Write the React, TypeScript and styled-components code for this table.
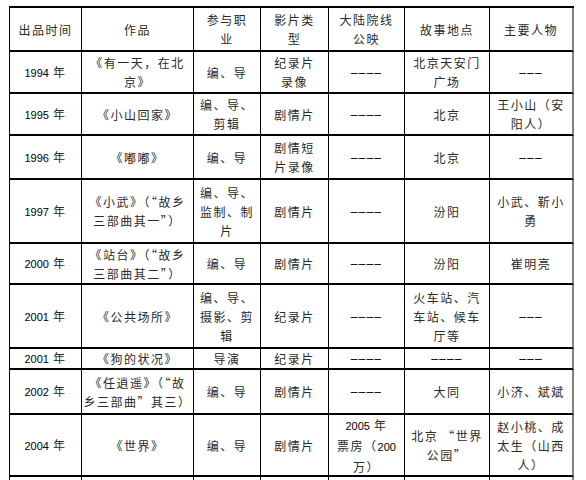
import React from 'react';
import styled, { createGlobalStyle } from 'styled-components';

const GlobalStyle = createGlobalStyle`
  html, body {
    margin: 0;
    padding: 0;
    background: #fff;
    overflow: hidden;
  }
  body {
    font-family: "Noto Sans CJK SC", "Liberation Sans", sans-serif;
  }
`;

const Page = styled.div`
  padding: 6px 0 0 9px;
  height: 480px;
  box-sizing: border-box;
`;

const Table = styled.div`
  display: grid;
  grid-template-columns: 72px 112px 67px 68px 76px 85px 84px;
  width: fit-content;
  border-top: 2px solid #000;
  border-left: 1px solid #000;
`;

const Cell = styled.div<{ $h: number; $last?: boolean }>`
  box-sizing: border-box;
  height: ${({ $h }) => $h}px;
  border-right: ${({ $last }) => ($last ? '2px solid #808080' : '1px solid #000')};
  border-bottom: 2px solid #000;
  display: flex;
  flex-direction: column;
  align-items: center;
  justify-content: center;
  overflow: hidden;
  font-family: "Noto Sans CJK SC", "Liberation Sans", sans-serif;
  font-size: 12px;
  line-height: 19px;
  letter-spacing: 1.5px;
  color: #2a2a2a;
  text-align: center;
  white-space: nowrap;
`;

const Line = styled.span`
  display: block;
`;

const Num = styled.span`
  font-family: "Liberation Sans", sans-serif;
  font-size: 11px;
  letter-spacing: 0;
  color: #000;
`;

const Dash = styled.span`
  font-family: "Liberation Sans", sans-serif;
  font-size: 12px;
  letter-spacing: 1.2px;
  color: #000;
`;

const header = ['出品时间', '作品', '参与职\n业', '影片类\n型', '大陆院线\n公映', '故事地点', '主要人物'];

const D4 = '––––';
const D3 = '–––';

const rows: { h: number; cells: string[] }[] = [
  { h: 42, cells: ['1994 年', '《有一天，在北\n京》', '编、导', '纪录片\n录像', D4, '北京天安门\n广场', D3] },
  { h: 42, cells: ['1995 年', '《小山回家》', '编、导、\n剪辑', '剧情片', D4, '北京', '王小山（安\n阳人）'] },
  { h: 44, cells: ['1996 年', '《嘟嘟》', '编、导', '剧情短\n片录像', D4, '北京', D3] },
  { h: 64, cells: ['1997 年', '《小武》（“故乡\n三部曲其一”）', '编、导、\n监制、制\n片', '剧情片', D4, '汾阳', '小武、靳小\n勇'] },
  { h: 41, cells: ['2000 年', '《站台》（“故乡\n三部曲其二”）', '编、导', '剧情片', D4, '汾阳', '崔明亮'] },
  { h: 64, cells: ['2001 年', '《公共场所》', '编、导、\n摄影、剪\n辑', '纪录片', D4, '火车站、汽\n车站、候车\n厅等', D3] },
  { h: 21, cells: ['2001 年', '《狗的状况》', '导演', '纪录片', D4, D4, D3] },
  { h: 45, cells: ['2002 年', '《任逍遥》（“故\n乡三部曲”其三）', '编、导', '剧情片', D4, '大同', '小济、斌斌'] },
  { h: 62, cells: ['2004 年', '《世界》', '编、导', '剧情片', '2005 年\n票房（200\n万）', '北京 “世界\n公园”', '赵小桃、成\n太生（山西\n人）'] },
  { h: 20, cells: ['', '', '', '', '', '', ''] },
];

function renderLine(text: string) {
  return text.split(/(\d+|–+)/).map((part, i) => {
    if (/^\d+$/.test(part)) return <Num key={i}>{part}</Num>;
    if (/^–+$/.test(part)) return <Dash key={i}>{part}</Dash>;
    return <React.Fragment key={i}>{part}</React.Fragment>;
  });
}

function CellText({ text }: { text: string }) {
  return (
    <>
      {text.split('\n').map((line, i) => (
        <Line key={i}>{renderLine(line)}</Line>
      ))}
    </>
  );
}

export default function App() {
  return (
    <Page>
      <GlobalStyle />
      <Table>
        {header.map((t, i) => (
          <Cell key={`h${i}`} $h={44} $last={i === header.length - 1}>
            <CellText text={t} />
          </Cell>
        ))}
        {rows.map((row, r) =>
          row.cells.map((t, i) => (
            <Cell key={`${r}-${i}`} $h={row.h} $last={i === row.cells.length - 1}>
              <CellText text={t} />
            </Cell>
          ))
        )}
      </Table>
    </Page>
  );
}
